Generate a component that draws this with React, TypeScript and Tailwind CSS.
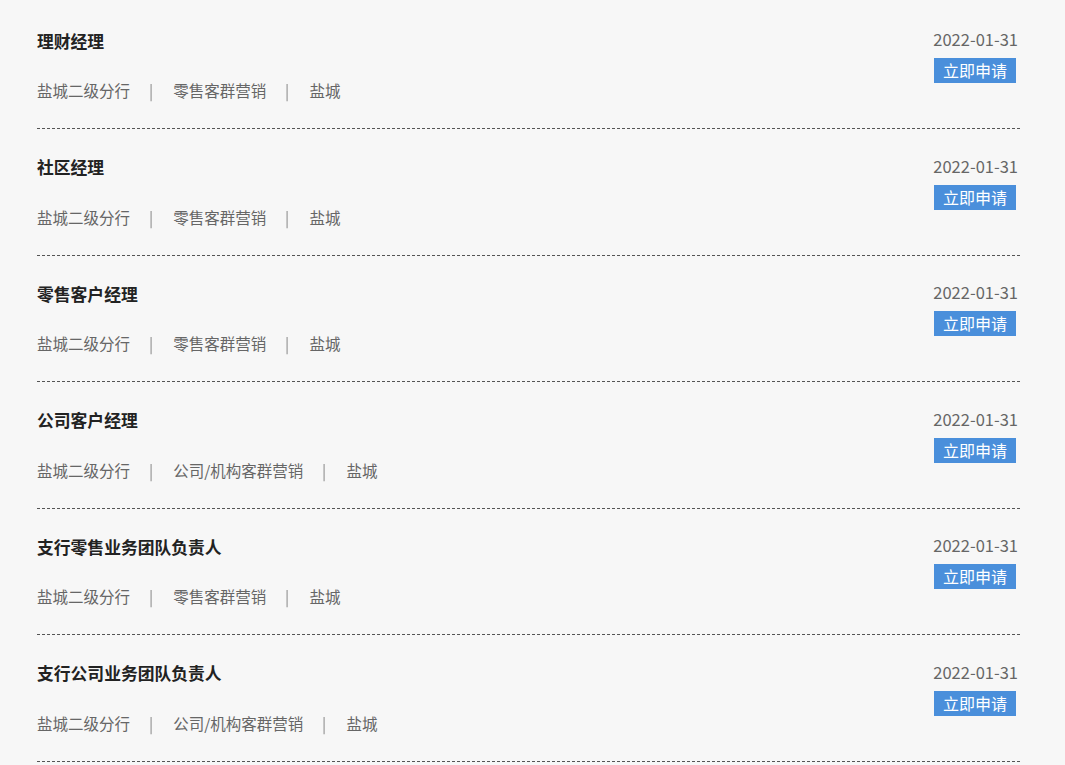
import React from "react";

const jobs = [
  { title: "理财经理", dept: "零售客群营销" },
  { title: "社区经理", dept: "零售客群营销" },
  { title: "零售客户经理", dept: "零售客群营销" },
  { title: "公司客户经理", dept: "公司/机构客群营销" },
  { title: "支行零售业务团队负责人", dept: "零售客群营销" },
  { title: "支行公司业务团队负责人", dept: "公司/机构客群营销" },
];

function Sep() {
  return <span className="ml-[19px] mr-[20px] inline-block text-[#8a8a8a] will-change-transform">|</span>;
}

export default function App() {
  return (
    <div
      className="min-h-[765px] w-full bg-[#f7f7f7] pt-[2.5px]"
      style={{ fontFamily: '"Microsoft YaHei", "Noto Sans CJK SC", "Noto Sans", sans-serif' }}
    >
      <ul className="ml-[37px] w-[983px]">
        {jobs.map((j, i) => (
          <li
            key={i}
            className="flex justify-between border-b border-dashed border-[#555] pt-[22px] pb-[26px]"
          >
            <div>
              <div className="text-[16.8px] leading-[32px] font-bold text-[#222]">{j.title}</div>
              <div className="mt-[21.5px] text-[15.5px] leading-[24px] text-[#666] flex items-center">
                <span>盐城二级分行</span>
                <Sep />
                <span>{j.dept}</span>
                <Sep />
                <span>盐城</span>
              </div>
            </div>
            <div className="flex flex-col items-end pt-[2.5px]">
              <div className="mr-[2px] text-[16.5px] leading-[24px] text-[#666]">2022-01-31</div>
              <button className="mt-[7px] mr-[4px] h-[25px] w-[82px] bg-[#4a8fdb] text-[16px] leading-[25px] text-white">
                立即申请
              </button>
            </div>
          </li>
        ))}
      </ul>
    </div>
  );
}
